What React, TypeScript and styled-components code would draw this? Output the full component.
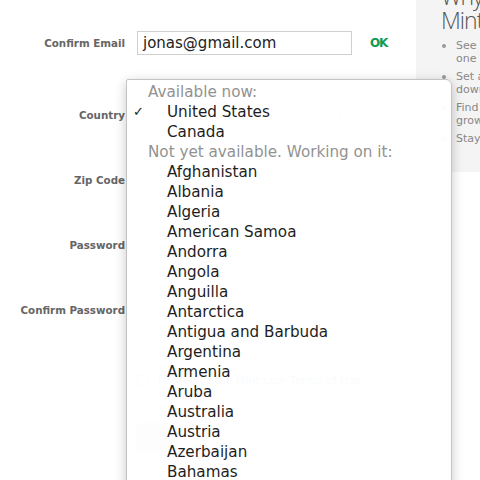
import React from 'react'
import styled, { createGlobalStyle } from 'styled-components'

const GlobalStyle = createGlobalStyle`
  html, body {
    margin: 0;
    padding: 0;
    background: #fff;
  }
`

const Page = styled.div`
  position: relative;
  width: 480px;
  height: 480px;
  overflow: hidden;
  display: flex;
  align-items: flex-start;
  background: #fff;
  font-family: "DejaVu Sans", "Liberation Sans", sans-serif;
`

const Form = styled.div`
  flex: 0 0 416px;
  display: flex;
  flex-direction: column;
  padding-top: 31px;
`

const Row = styled.div<{ $top?: number }>`
  display: flex;
  align-items: center;
  height: 24px;
  margin-top: ${p => p.$top || 0}px;
`

const Label = styled.div`
  flex: 0 0 125px;
  text-align: right;
  font-size: 10.3px;
  font-weight: bold;
  color: #666;
  white-space: nowrap;
  margin-right: 12px;
`

const Input = styled.div`
  box-sizing: border-box;
  width: 215px;
  height: 24px;
  border: 1px solid #cfcfcf;
  padding: 0 5px;
  font-size: 15px;
  line-height: 22px;
  color: #222;
`

const Select = styled(Input)`
  border-radius: 6px;
  position: relative;
  &::after {
    content: '⇕';
    position: absolute;
    right: 6px;
    top: 0;
    font-size: 11px;
    color: #999;
  }
`

const Ok = styled.div`
  margin-left: 18px;
  font-size: 12px;
  font-weight: bold;
  letter-spacing: -1.2px;
  color: #119a52;
`

const Agree = styled.div`
  display: flex;
  align-items: center;
  gap: 9px;
  margin: 52px 0 0 137px;
  font-size: 11px;
  color: #3a6fb0;
`

const Box = styled.div`
  width: 10px;
  height: 10px;
  border: 1px solid #999;
  border-radius: 2px;
`

const Submit = styled.div`
  width: 44px;
  height: 30px;
  margin: 36px 0 0 136px;
  border-radius: 3px;
  background: #bbb;
`

const Sidebar = styled.div`
  flex: 0 0 64px;
  height: 172px;
  overflow: hidden;
  background: #f4f4f4;
  padding-left: 25px;
  box-sizing: border-box;
`

const Heading = styled.div`
  margin-top: -16px;
  font-size: 23px;
  line-height: 24px;
  letter-spacing: -1px;
  color: #555;
  white-space: nowrap;
  font-family: "Open Sans", "DejaVu Sans", sans-serif;
  font-weight: 300;
`

const Bullets = styled.ul`
  margin: 7px 0 0;
  padding: 0;
  list-style: none;
`

const Bullet = styled.li`
  position: relative;
  padding-left: 15px;
  margin-bottom: 5px;
  font-size: 11px;
  line-height: 13px;
  color: #888;
  white-space: nowrap;
  &::before {
    content: '';
    position: absolute;
    left: 1px;
    top: 5px;
    width: 4px;
    height: 4px;
    border-radius: 50%;
    background: #999;
  }
`

const Menu = styled.div`
  position: absolute;
  left: 126px;
  top: 79px;
  width: 326px;
  bottom: -12px;
  box-sizing: border-box;
  padding-top: 2px;
  background: rgba(255, 255, 255, 0.97);
  border: 1px solid #c4c4c4;
  border-radius: 2px 6px 0 0;
  box-shadow: 0 3px 12px rgba(0, 0, 0, 0.22);
  font-size: 15.2px;
  line-height: 20px;
`

const Group = styled.div`
  padding-left: 21px;
  color: #929292;
  white-space: nowrap;
`

const Item = styled.div`
  display: flex;
  color: #1e1e1e;
  white-space: nowrap;
`

const Check = styled.span`
  flex: 0 0 34px;
  padding-left: 6px;
  font-size: 13px;
  font-weight: bold;
`

const countries = [
  'Afghanistan', 'Albania', 'Algeria', 'American Samoa', 'Andorra', 'Angola',
  'Anguilla', 'Antarctica', 'Antigua and Barbuda', 'Argentina', 'Armenia',
  'Aruba', 'Australia', 'Austria', 'Azerbaijan', 'Bahamas', 'Bahrain',
]

const Option = ({ name, checked }: { name: string; checked?: boolean }) => (
  <Item>
    <Check>{checked ? '✓' : ''}</Check>
    {name}
  </Item>
)

export default function App() {
  return (
    <Page>
      <GlobalStyle />
      <Form>
        <Row>
          <Label>Confirm Email</Label>
          <Input>jonas@gmail.com</Input>
          <Ok>OK</Ok>
        </Row>
        <Row $top={48}>
          <Label>Country</Label>
          <Select />
        </Row>
        <Row $top={41}>
          <Label>Zip Code</Label>
          <Input />
        </Row>
        <Row $top={41}>
          <Label>Password</Label>
          <Input />
        </Row>
        <Row $top={41}>
          <Label>Confirm Password</Label>
          <Input />
        </Row>
        <Agree>
          <Box />
          I agree to the Mint.com Terms of Use
        </Agree>
        <Submit />
      </Form>
      <Sidebar>
        <Heading>
          Why use
          <br />
          Mint
        </Heading>
        <Bullets>
          <Bullet>See all your accounts in<br />one place</Bullet>
          <Bullet>Set a budget and pay<br />down debt</Bullet>
          <Bullet>Find ways to save and<br />grow your money</Bullet>
          <Bullet>Stay on top of bills</Bullet>
        </Bullets>
      </Sidebar>
      <Menu>
        <Group>Available now:</Group>
        <Option name="United States" checked />
        <Option name="Canada" />
        <Group>Not yet available. Working on it:</Group>
        {countries.map(c => (
          <Option key={c} name={c} />
        ))}
      </Menu>
    </Page>
  )
}
